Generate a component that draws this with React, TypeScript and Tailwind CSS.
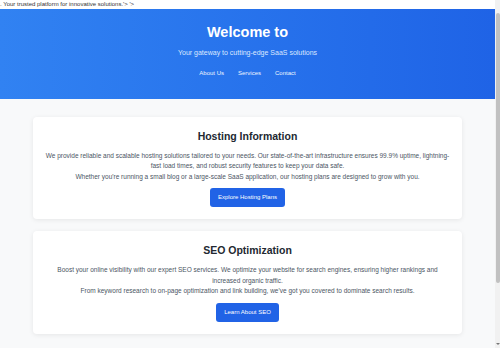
import React from 'react';

const sections = [
  {
    title: 'Hosting Information',
    lines: [
      'We provide reliable and scalable hosting solutions tailored to your needs. Our state-of-the-art infrastructure ensures 99.9% uptime, lightning-fast load times, and robust security features to keep your data safe.',
      "Whether you're running a small blog or a large-scale SaaS application, our hosting plans are designed to grow with you.",
    ],
    cta: 'Explore Hosting Plans',
  },
  {
    title: 'SEO Optimization',
    lines: [
      'Boost your online visibility with our expert SEO services. We optimize your website for search engines, ensuring higher rankings and increased organic traffic.',
      "From keyword research to on-page optimization and link building, we've got you covered to dominate search results.",
    ],
    cta: 'Learn About SEO',
  },
];

function Section({ title, lines, cta }: { title: string; lines: string[]; cta: string }) {
  return (
    <section className="bg-white rounded-[4px] shadow-[0_1px_5px_rgba(0,0,0,0.08)] p-[12px] flex flex-col items-center text-center">
      <h2 className="text-[10.5px] leading-[14px] font-bold text-[#222831] mb-[8px]">{title}</h2>
      {lines.map((line) => (
        <p key={line} className="text-[6.5px] leading-[10.5px] text-[#4b5563]">
          {line}
        </p>
      ))}
      <button className="mt-[6px] h-[19px] px-[8px] rounded-[3px] bg-[#2163e6] text-white text-[6px]">
        {cta}
      </button>
    </section>
  );
}

// the reference shows a classic browser scrollbar on the right edge
function ScrollStrip() {
  return (
    <div className="w-[5px] shrink-0 bg-[#f1f1f1] flex flex-col items-center">
      <div className="h-[13px]" />
      <div className="w-[4px] h-[270px] rounded-[2px] bg-[#c1c1c1]" />
      <div className="flex-1" />
      <div className="mb-[3px] w-0 h-0 border-l-[2px] border-r-[2px] border-t-[2px] border-l-transparent border-r-transparent border-t-[#777]" />
    </div>
  );
}

export default function App() {
  return (
    <div className="h-screen overflow-hidden flex bg-[#f8f9fa] font-['Liberation_Sans',Arial,sans-serif]">
      <div className="flex-1 min-w-0">
        {/* stray text from a broken meta tag in the original page */}
        <div className="bg-white text-[6px] leading-[9px] text-[#333] whitespace-nowrap">
          . Your trusted platform for innovative solutions.'&gt; '&gt;
        </div>

        <header className="bg-gradient-to-r from-[#3182f2] to-[#1f63e6] text-white text-center pt-[15px] pb-[21px]">
          <h1 className="text-[14.5px] leading-[17.4px] font-bold">Welcome to</h1>
          <p className="mt-[7px] text-[7px] leading-[10.5px] text-[#dbe8ff]">
            Your gateway to cutting-edge SaaS solutions
          </p>
          <nav className="mt-[10px] flex justify-center gap-[14px] text-[6px] leading-[9px] text-[#eef4ff]">
            <a href="#">About Us</a>
            <a href="#">Services</a>
            <a href="#">Contact</a>
          </nav>
        </header>

        <main className="max-w-[429px] mx-auto pt-[18px] pb-[108px] flex flex-col gap-[12px]">
          {sections.map((s) => (
            <Section key={s.title} {...s} />
          ))}
        </main>
      </div>
      <ScrollStrip />
    </div>
  );
}
